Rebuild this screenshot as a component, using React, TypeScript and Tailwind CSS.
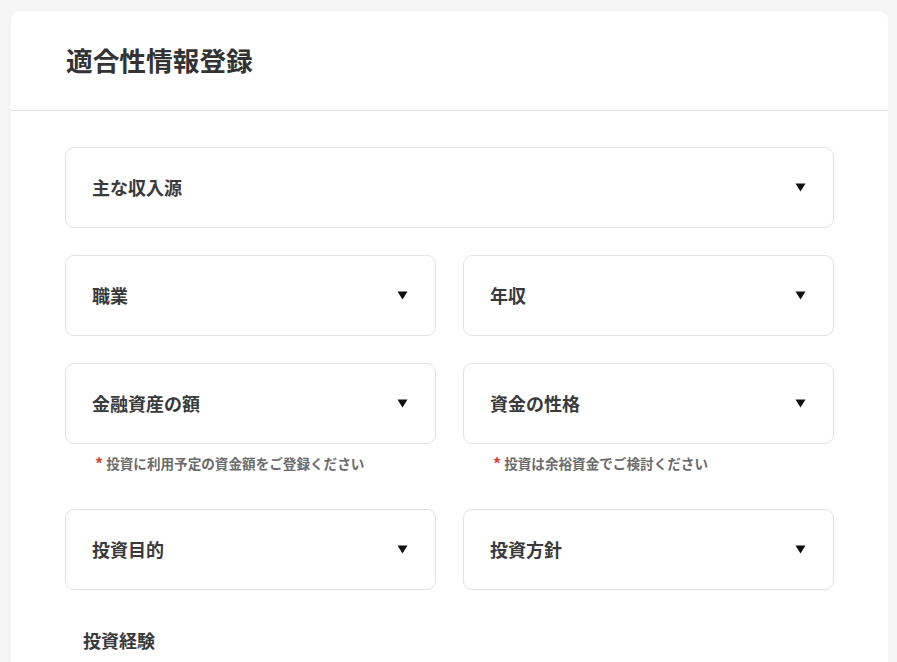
import React from 'react';

const FONT = { fontFamily: '"Noto Sans CJK JP", "Noto Sans", sans-serif' };

function Caret() {
  return (
    <svg width="11" height="9" viewBox="0 0 11 9" className="shrink-0">
      <path d="M0.5 0.5h10L5.5 8.5z" fill="#111" />
    </svg>
  );
}

function SelectField({ label }: { label: string }) {
  return (
    <div className="flex h-[81px] items-center justify-between rounded-[9px] border border-[#e2e2e2] bg-white pl-[26px] pr-[27px]">
      <span className="text-[18px] font-bold text-[#3a3a3a]">{label}</span>
      <Caret />
    </div>
  );
}

function Note({ text }: { text: string }) {
  return (
    <p className="mt-[9px] flex items-center pl-[30px] text-[13.6px] font-bold text-[#6b6b6b]">
      <span className="mr-[3px] text-[16px] leading-none text-[#d9462f]">*</span>
      {text}
    </p>
  );
}

export default function App() {
  return (
    <div className="min-h-[662px] bg-[#f5f5f5] pl-[11px] pr-[9px] pt-[11px]" style={FONT}>
      <div className="min-h-[651px] rounded-t-[9px] bg-white">
        <div className="flex h-[100px] items-center border-b border-[#e2e2e2] px-[55px]">
          <h1 className="text-[26.7px] font-bold text-[#333]">適合性情報登録</h1>
        </div>
        <div className="px-[54px] pt-[36px]">
          <SelectField label="主な収入源" />
          <div className="mt-[27px] grid grid-cols-2 gap-[27px]">
            <SelectField label="職業" />
            <SelectField label="年収" />
          </div>
          <div className="mt-[27px] grid grid-cols-2 gap-x-[27px]">
            <div>
              <SelectField label="金融資産の額" />
              <Note text="投資に利用予定の資金額をご登録ください" />
            </div>
            <div>
              <SelectField label="資金の性格" />
              <Note text="投資は余裕資金でご検討ください" />
            </div>
          </div>
          <div className="mt-[36px] grid grid-cols-2 gap-[27px]">
            <SelectField label="投資目的" />
            <SelectField label="投資方針" />
          </div>
          <h2 className="mt-[37px] pl-[18px] text-[18px] font-bold text-[#3a3a3a]">投資経験</h2>
        </div>
      </div>
    </div>
  );
}
